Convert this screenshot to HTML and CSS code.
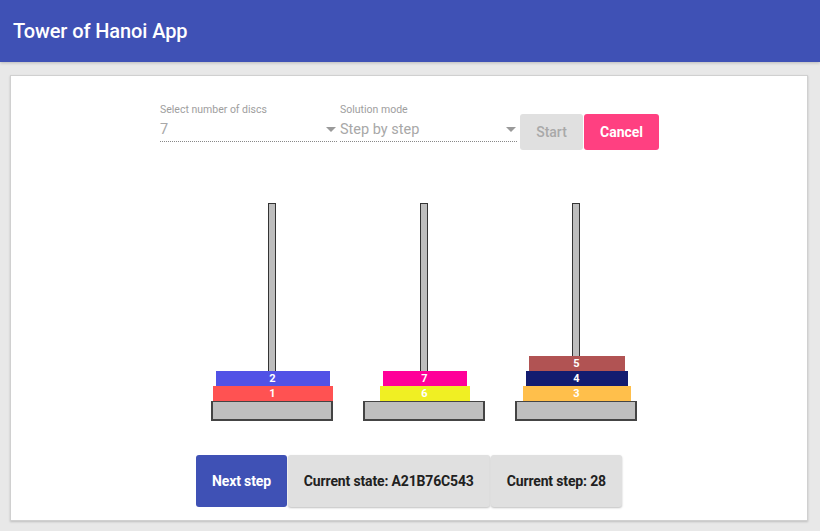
FILE: index.html
```html
<!DOCTYPE html>
<html>
<head>
<meta charset="utf-8">
<link rel="stylesheet" href="styles.css">
</head>
<body>
<header class="appbar"><h1 class="title">Tower of Hanoi App</h1></header>
<main class="card">
  <div class="controls">
    <div class="field">
      <label class="field-label">Select number of discs</label>
      <div class="select"><span class="select-value">7</span><span class="arrow"></span></div>
    </div>
    <div class="field">
      <label class="field-label">Solution mode</label>
      <div class="select"><span class="select-value">Step by step</span><span class="arrow"></span></div>
    </div>
    <button class="btn btn-disabled">Start</button>
    <button class="btn btn-accent">Cancel</button>
  </div>
  <div class="towers">
    <div class="tower">
      <div class="peg"></div>
      <div class="disc d2" style="width:114px">2</div>
      <div class="disc d1" style="width:120px">1</div>
      <div class="base"></div>
    </div>
    <div class="tower">
      <div class="peg"></div>
      <div class="disc d7" style="width:84px">7</div>
      <div class="disc d6" style="width:90px">6</div>
      <div class="base"></div>
    </div>
    <div class="tower">
      <div class="peg"></div>
      <div class="disc d5" style="width:96px">5</div>
      <div class="disc d4" style="width:102px">4</div>
      <div class="disc d3" style="width:108px">3</div>
      <div class="base"></div>
    </div>
  </div>
  <div class="actions">
    <button class="big-btn primary">Next step</button>
    <div class="big-btn grey">Current state: A21B76C543</div>
    <div class="big-btn grey">Current step: 28</div>
  </div>
</main>
</body>
</html>
```
FILE: styles.css
```css
* { box-sizing: border-box; }
html, body { margin: 0; padding: 0; }
body {
  background: #e8e8e8;
  font-family: Roboto, "Liberation Sans", sans-serif;
  height: 531px;
  overflow: hidden;
}
.appbar {
  background: #3f51b5;
  height: 62px;
  display: flex;
  align-items: center;
  padding-left: 13px;
  box-shadow: 0 1px 3px rgba(0,0,0,0.2);
}
.title {
  margin: 0;
  color: #fff;
  font-size: 20px;
  font-weight: 500;
  letter-spacing: -0.1px;
}
.card {
  margin: 13px 12px 0 10px;
  height: 446px;
  background: #fff;
  border: 1px solid #d0d0d0;
  box-shadow: 0 1px 2px rgba(0,0,0,0.18);
  display: flex;
  flex-direction: column;
  align-items: center;
}
.controls {
  margin-top: 27px;
  display: flex;
  align-items: flex-start;
  margin-left: 1px;
}
.field {
  width: 177px;
  margin-right: 3px;
}
.field-label {
  display: block;
  font-size: 10.5px;
  line-height: 13px;
  color: #9e9e9e;
}
.select {
  height: 26px;
  border-bottom: 1px dotted #888;
  display: flex;
  align-items: center;
  justify-content: space-between;
}
.select-value {
  font-size: 14.5px;
  color: #a8a8a8;
  padding-top: 1px;
}
.arrow {
  width: 0; height: 0;
  border-left: 5px solid transparent;
  border-right: 5px solid transparent;
  border-top: 5px solid #9a9a9a;
  margin-right: 1px;
  margin-top: 1px;
}
.btn {
  margin-top: 11px;
  height: 36px;
  border: none;
  border-radius: 3px;
  font-family: Roboto, "Liberation Sans", sans-serif;
  font-size: 14px;
  padding: 0 16px;
}
.btn-disabled {
  width: 63px;
  background: #e0e0e0;
  color: #a9a9a9;
  font-weight: 500;
  margin-right: 1px;
}
.btn-accent {
  width: 75px;
  background: #ff4081;
  color: #fff;
  font-weight: 700;
}
.towers {
  margin-top: 53px;
  display: flex;
  padding-left: 29px;
}
.tower {
  width: 152px;
  height: 218px;
  display: flex;
  flex-direction: column;
  align-items: center;
}
.peg {
  flex: 1;
  width: 8px;
  background: #bdbdbd;
  border: 1px solid #333;
  border-bottom: none;
  margin-left: 1px;
}
.disc {
  height: 15px;
  color: #fff;
  font-size: 11px;
  font-weight: 700;
  line-height: 15px;
  text-align: center;
  margin-left: 2px;
}
.d1 { background: #ff5252; }
.d2 { background: #5152e6; }
.d3 { background: #ffbf4b; }
.d4 { background: #131c70; }
.d5 { background: #b15353; }
.d6 { background: #f0ef23; }
.d7 { background: #ff0099; }
.base {
  width: 122px;
  height: 20px;
  background: #bfbfbf;
  border: 2px solid #444;
  border-top-width: 1px;
}
.actions {
  margin-top: 34px;
  display: flex;
  gap: 1px;
}
.big-btn {
  height: 52px;
  border: none;
  border-radius: 3px;
  padding: 0 16px;
  display: flex;
  align-items: center;
  white-space: nowrap;
  font-family: Roboto, "Liberation Sans", sans-serif;
  font-size: 14px;
  font-weight: 700;
  letter-spacing: -0.15px;
}
.primary {
  background: #3f51b5;
  color: #fff;
  justify-content: center;
}
.grey {
  background: #e0e0e0;
  color: #212121;
  box-shadow: 0 1px 2px rgba(0,0,0,0.25);
}
```
